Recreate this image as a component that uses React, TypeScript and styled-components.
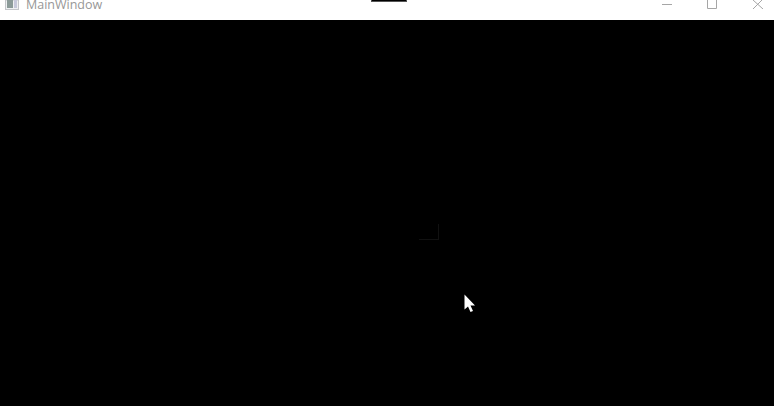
import React from "react";
import styled, { createGlobalStyle } from "styled-components";

const GlobalStyle = createGlobalStyle`
  html, body {
    margin: 0;
    padding: 0;
    background: #000;
  }
`;

export default function App() {
  return (
    <>
      <GlobalStyle />
      <Window>
        <TitleBar>
          <AppIcon viewBox="0 0 14 10">
            <rect x="0.5" y="0" width="13" height="9.5" fill="#eef0f2" stroke="#c4c6ca" />
            <rect x="2" y="0" width="6" height="8" fill="#8b9a98" />
            <rect x="9" y="0" width="3" height="8" fill="#c6c8da" />
          </AppIcon>
          <Title>MainWindow</Title>
          <Controls>
            <MinimizeIcon viewBox="0 0 10 1">
              <line x1="0" y1="0.5" x2="10" y2="0.5" stroke="#a6a6a6" />
            </MinimizeIcon>
            <MaximizeIcon viewBox="0 0 10 9">
              <path d="M0.5 0V8.5H9.5V0" fill="none" stroke="#a6a6a6" />
            </MaximizeIcon>
            <CloseIcon viewBox="0 0 11 9">
              <path d="M0 9L9 0M0 0L10 9" fill="none" stroke="#a6a6a6" />
            </CloseIcon>
          </Controls>
          <TopTab />
        </TitleBar>
        <Viewport>
          <CornerMark />
          <Cursor viewBox="0 0 12 19">
            <path d="M0.5 0.5V15.5L4 12.5L6.5 18L9 17L6.5 11.5H11Z" fill="#fff" />
          </Cursor>
        </Viewport>
      </Window>
    </>
  );
}

const Window = styled.div`
  display: flex;
  flex-direction: column;
  height: 406px;
  overflow: hidden;
  width: 774px;
`;

const TitleBar = styled.header`
  align-items: center;
  background: #fff;
  display: flex;
  flex: 0 0 20px;
  height: 20px;
  overflow: hidden;
  padding-left: 5px;
  position: relative;
`;

const AppIcon = styled.svg`
  display: block;
  height: 10px;
  margin-bottom: 10px;
  width: 14px;
`;

const Title = styled.span`
  color: #979797;
  font-family: "Open Sans", "Liberation Sans", sans-serif;
  font-size: 12.5px;
  line-height: 16px;
  margin: 0 0 11px 7px;
`;

const Controls = styled.div`
  align-items: flex-start;
  display: flex;
  height: 20px;
  margin-left: auto;
`;

const MinimizeIcon = styled.svg`
  display: block;
  height: 1px;
  margin: 4px 0 0 0;
  width: 10px;
`;

const MaximizeIcon = styled.svg`
  display: block;
  height: 9px;
  margin-left: 35px;
  width: 10px;
`;

const CloseIcon = styled.svg`
  display: block;
  height: 9px;
  margin: 0 10px 0 36px;
  width: 11px;
`;

const TopTab = styled.div`
  background: #000;
  border: 1px solid #555;
  border-top: 0;
  box-sizing: border-box;
  height: 2px;
  left: 371px;
  position: absolute;
  top: 0;
  width: 36px;
`;

const Viewport = styled.main`
  background: #000;
  flex: 1;
  position: relative;
`;

const CornerMark = styled.div`
  border-bottom: 1px solid #111;
  border-right: 1px solid #111;
  box-sizing: border-box;
  height: 16px;
  left: 419px;
  position: absolute;
  top: 204px;
  width: 20px;
`;

const Cursor = styled.svg`
  display: block;
  height: 19px;
  left: 464px;
  position: absolute;
  top: 274px;
  width: 12px;
`;
